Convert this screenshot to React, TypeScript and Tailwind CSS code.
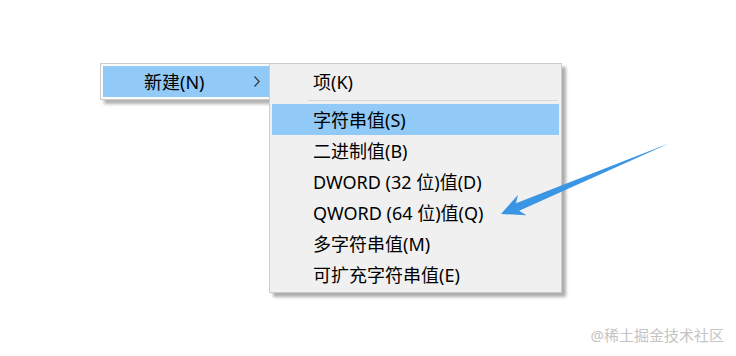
const items = [
  { label: "字符串值(S)", active: true },
  { label: "二进制值(B)" },
  { label: "DWORD (32 位)值(D)" },
  { label: "QWORD (64 位)值(Q)" },
  { label: "多字符串值(M)" },
  { label: "可扩充字符串值(E)" },
];

const font = "font-['Noto_Sans','Noto_Sans_CJK_SC',sans-serif]";

export default function App() {
  return (
    <div className={`relative w-[736px] h-[356px] bg-white overflow-hidden ${font} text-black`}>
      <div className="flex items-start pt-[63px] pl-[100px] text-[18px] leading-none">
        {/* parent menu */}
        <div className="w-[172px] border border-[#cccccc] bg-[#fbfbfb] p-[2px] shadow-[4px_4px_3px_rgba(0,0,0,0.3)]">
          <div className="h-[31px] flex items-center justify-between bg-[#91c9f7] pl-[41px] pr-[7px]">
            <span>新建(N)</span>
            <svg width="6" height="11" viewBox="0 0 6 11" className="mr-[2px]">
              <polyline points="0.5,0.5 5.2,5.5 0.5,10.5" fill="none" stroke="#333" strokeWidth="1.1" />
            </svg>
          </div>
        </div>

        {/* submenu */}
        <div className="relative z-10 -ml-[3px] w-[293px] border border-[#cccccc] bg-[#f0f0f0] p-[2px] shadow-[4px_4px_3px_rgba(0,0,0,0.32)]">
          <div className="h-[31px] flex items-center pl-[41px]">项(K)</div>
          <div className="h-[7px] flex items-center pl-[36px] pr-[1px]">
            <div className="h-px w-full bg-[#d7d7d7]" />
          </div>
          {items.map((it) => (
            <div
              key={it.label}
              className={`h-[31px] flex items-center pl-[41px] ${it.active ? "bg-[#91c9f7]" : ""}`}
            >
              {it.label}
            </div>
          ))}
        </div>
      </div>

      {/* annotation arrow */}
      <svg className="absolute left-0 top-0 z-20 pointer-events-none" width="736" height="356">
        <polygon
          points="501,214 517.9,194.9 516,203.3 670,143 519.2,210.7 526.5,215.3"
          fill="#3a95e4"
        />
      </svg>

      {/* watermark */}
      <div className="absolute right-[12px] bottom-[10px] text-[15px] text-[#c4c4c4]">
        @稀土掘金技术社区
      </div>
    </div>
  );
}
